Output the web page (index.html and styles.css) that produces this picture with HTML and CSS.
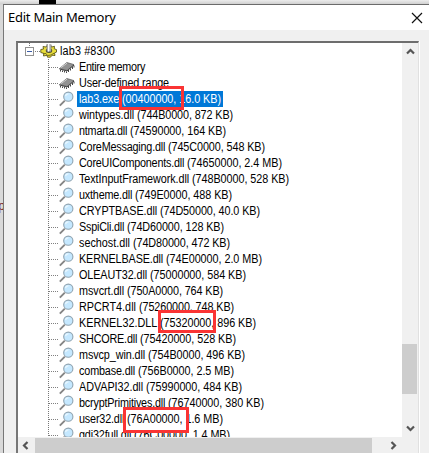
FILE: index.html
```
<!DOCTYPE html>
<html lang="en">
<head>
<meta charset="utf-8">
<title>Edit Main Memory</title>
<link rel="stylesheet" href="styles.css">
</head>
<body>
<svg width="0" height="0" class="defs">
  <symbol id="lens" viewBox="0 0 18 16">
    <path d="M.8 14.600 5.800 9.600" stroke="#858585" stroke-width="1.900"/>
    <circle cx="9.300" cy="5.700" r="4.600" fill="#c5e8ff" stroke="#8fa3b0" stroke-width="1.100"/>
    <path d="M6.500 5.200a3 3 0 0 1 3-2.400" stroke="#e9f7ff" stroke-width="1.200" fill="none"/>
  </symbol>
  <symbol id="chip" viewBox="0 0 18 16">
    <path d="M.5 9.500 7.800 3.500 15 5.600 8 11.500Z" fill="#929292" stroke="#5a5a5a" stroke-width=".7"/>
    <path d="M1.500 9 8 4.200" stroke="#d0d0d0"/>
    <path d="M.5 10 8 12 15 6" stroke="#333" stroke-width=".9" fill="none"/>
    <path d="M1.500 11v1.500M3.500 11.500v1.500M5.500 12v1.500M7.500 12.500v1.500M9.500 11v2M11.500 9.500v2M13.500 8v2M15 6.500v2" stroke="#333" stroke-width=".9"/>
  </symbol>
  <symbol id="gear" viewBox="0 0 18 16">
    <path d="M.8 6.500 3.500 6 3 3.500 6 4 7.500 2h3l1 2 3-.7-.2 2.500 2.200.8v2.500l-2 .8.5 2.600-3-.3-1.500 2h-3L7 12.300 3.500 13l.3-2.600L.8 9.500Z" fill="#e8dd3c" stroke="#4c480c" stroke-width=".8"/>
    <path d="M3 10.700 6 10.500l1.500 2 3.500-.5 3-1.800" stroke="#6b6518" stroke-width=".9" fill="none"/>
    <ellipse cx="9" cy="7.800" rx="3.200" ry="2.200" fill="#4c4a30"/>
    <path d="M7 1h4v7.500H7z" fill="#c9c9c9"/>
    <path d="M7 1v7.500M11 1.500v7" stroke="#777" stroke-width=".8"/>
    <path d="M8.500 1v7.500" stroke="#fff"/>
  </symbol>
</svg>
<div class="screen">
  <div class="backdrop-mark"></div>
  <div class="backdrop-text">p</div>
  <section class="window">
    <header class="titlebar">
      <h1>Edit Main Memory</h1>
      <svg class="close" width="12" height="12" viewBox="0 0 12 12"><path d="M1 1 11 11M11 1 1 11" stroke="#111" stroke-width="1.200"/></svg>
    </header>
    <div class="panel">
      <div class="view">
        <div class="row root">
          <span class="toggle"></span><span class="dots"></span>
          <svg class="gear" width="18" height="16"><use href="#gear"/></svg>
          <span class="label"><span class="fit" data-w="55">lab3 #8300</span></span>
        </div>
        <div class="children" id="children"></div>
      </div>
      <div class="vbar">
        <svg width="9" height="7" viewBox="0 0 9 7"><path d="M1 5.500 4.500 2 8 5.500" /></svg>
        <div class="vthumb"></div>
        <svg width="9" height="7" viewBox="0 0 9 7"><path d="M1 1.500 4.500 5 8 1.500" /></svg>
      </div>
      <div class="hbar">
        <svg width="7" height="9" viewBox="0 0 7 9"><path d="M5.500 1 2 4.500 5.500 8" /></svg>
        <div class="hthumb"></div>
        <svg width="7" height="9" viewBox="0 0 7 9"><path d="M1.500 1 5 4.500 1.500 8" /></svg>
      </div>
      <div class="corner"></div>
    </div>
  </section>
  <div class="mark mark-exe"></div>
  <div class="mark mark-kernel"></div>
  <div class="mark mark-user"></div>
</div>
<script src="tree.js"></script>
</body>
</html>
```
FILE: styles.css
```
* { box-sizing: border-box; }
body { margin: 0; overflow: hidden; font-family: "Liberation Sans", Arial, sans-serif; }
.defs { position: absolute; }
.screen {
  position: relative;
  width: 429px;
  height: 453px;
  padding: 4px 0 0 3px;
  overflow: hidden;
  background: linear-gradient(#ececec, #d0d0d0 4px, #d9d9d9 5px);
}
.backdrop-mark { position: absolute; left: 39px; top: 0; width: 17px; height: 4px; background: #000; }
.backdrop-text { position: absolute; left: -2px; top: 200px; font: 12px/14px "Liberation Mono", monospace; color: #7d2020; }
.window { position: relative; height: 449px; border-top: 1px solid #6b6b6b; border-left: 1px solid #777; background: #f0f0f0; }
.titlebar { display: flex; align-items: center; justify-content: space-between; height: 25px; padding: 0 6px 0 4px; background: #fff; }
.titlebar h1 { margin: 0; font: 400 13px/23px "Noto Sans", sans-serif; letter-spacing: -.25px; color: #000; white-space: nowrap; }
.close { display: block; }
.panel {
  display: grid;
  grid-template: 394px 16px / 384px 16px;
  width: 403px;
  height: 413px;
  margin: 11px 0 0 12px;
  border: solid;
  border-width: 2px 1px 1px 2px;
  border-color: #6d6d6d #e0e0e0 #e0e0e0 #777;
  box-shadow: 1px 0 #fff;
  background: #f0f0f0;
}
.view { overflow: hidden; background: #fff; }
.row { display: flex; align-items: center; height: 16px; font-size: 12px; line-height: 16px; white-space: pre; color: #000; }
.root { padding-left: 7px; background: repeating-linear-gradient(#777 0 1px, transparent 1px 2px) 11px 0 / 1px 4px no-repeat; }
.toggle { width: 9px; height: 9px; border: 1px solid #919191; background: linear-gradient(#3b5da8, #3b5da8) center / 5px 1px no-repeat #fff; }
.dots { width: 6px; height: 1px; background: repeating-linear-gradient(90deg, transparent 0 1px, #808080 1px 2px); }
.gear { margin-right: 1px; }
.root .label { padding-left: 1px; }
.children { margin-left: 30px; background: repeating-linear-gradient(#777 0 1px, #fff 1px 2px) 0 0 / 1px 100% no-repeat; }
.children .dots { flex: none; width: 11px; }
.children svg { flex: none; width: 18px; height: 16px; }
.children .label { display: flex; height: 16px; padding: 0 2px 0 2px; }
.children .selected { background: #0078d7; color: #fff; }
.fit { display: inline-block; white-space: pre; transform: scaleX(.9); transform-origin: left; }
.vbar { display: flex; flex-direction: column; align-items: center; padding: 5px 0 5px; }
.vbar svg, .hbar svg { flex: none; fill: none; stroke: #555; stroke-width: 2.2; }
.vthumb { width: 15px; height: 50px; margin: 289px 1px auto 0; background: #cdcdcd; }
.hbar { display: flex; align-items: center; padding: 0 5px 0 4px; }
.hthumb { width: 337px; height: 15px; margin: 0 auto 0 6px; background: #cdcdcd; }
.mark { position: absolute; border: 3px solid #fa3434; }
.mark-exe { left: 119px; top: 86px; width: 65px; height: 24px; }
.mark-kernel { left: 158px; top: 310px; width: 58px; height: 23px; }
.mark-user { left: 123px; top: 407px; width: 66px; height: 26px; }
```
FILE: tree.js
```
// Each entry: label, size text, x offset of the size text, total width.
const modules = [
  ["lab3.exe", "(00400000, 16.0 KB)", 43, 142],
  ["wintypes.dll", "(744B0000, 872 KB)", 58, 154],
  ["ntmarta.dll", "(74590000, 164 KB)", 51, 147],
  ["CoreMessaging.dll", "(745C0000, 548 KB)", 89, 186],
  ["CoreUIComponents.dll", "(74650000, 2.4 MB)", 108, 203],
  ["TextInputFramework.dll", "(748B0000, 528 KB)", 113, 210],
  ["uxtheme.dll", "(749E0000, 488 KB)", 56, 153],
  ["CRYPTBASE.dll", "(74D50000, 40.0 KB)", 81, 181],
  ["SspiCli.dll", "(74D60000, 128 KB)", 48, 145],
  ["sechost.dll", "(74D80000, 472 KB)", 54, 151],
  ["KERNELBASE.dll", "(74E00000, 2.0 MB)", 87, 183],
  ["OLEAUT32.dll", "(75000000, 584 KB)", 71, 167],
  ["msvcrt.dll", "(750A0000, 764 KB)", 48, 144],
  ["RPCRT4.dll", "(75260000, 748 KB)", 60, 155],
  ["KERNEL32.DLL", "(75320000, 896 KB)", 81, 177],
  ["SHCORE.dll", "(75420000, 528 KB)", 61, 157],
  ["msvcp_win.dll", "(754B0000, 496 KB)", 69, 166],
  ["combase.dll", "(756B0000, 2.5 MB)", 59, 155],
  ["ADVAPI32.dll", "(75990000, 484 KB)", 67, 163],
  ["bcryptPrimitives.dll", "(76740000, 380 KB)", 89, 185],
  ["user32.dll", "(76A00000, 1.6 MB)", 48, 144],
  ["gdi32full.dll", "(76C00000, 1.4 MB)", 55, 151]
];
const part = (text, width) => `<span class="fit" data-w="${width}">${text}</span>`;
const row = (icon, cls, html) =>
  `<div class="row"><span class="dots"></span><svg><use href="#${icon}"/></svg><span class="label ${cls}">${html}</span></div>`;
let html = row("chip", "", part("Entire memory", 66)) + row("chip", "", part("User-defined range", 90));
modules.forEach(([name, info, split, end], i) => {
  html += row("lens", i === 0 ? "selected" : "", part(name + " ", split) + part(info, end - split));
});
document.getElementById("children").innerHTML = html;
// Condensed text: adjust the tracking so every label fills its column width.
const CONDENSE = 0.9;
document.querySelectorAll(".fit").forEach(el => {
  const target = Number(el.dataset.w);
  const natural = el.getBoundingClientRect().width / CONDENSE;
  el.style.letterSpacing = (target / CONDENSE - natural) / el.textContent.length + "px";
  el.style.width = target + "px";
});
```
